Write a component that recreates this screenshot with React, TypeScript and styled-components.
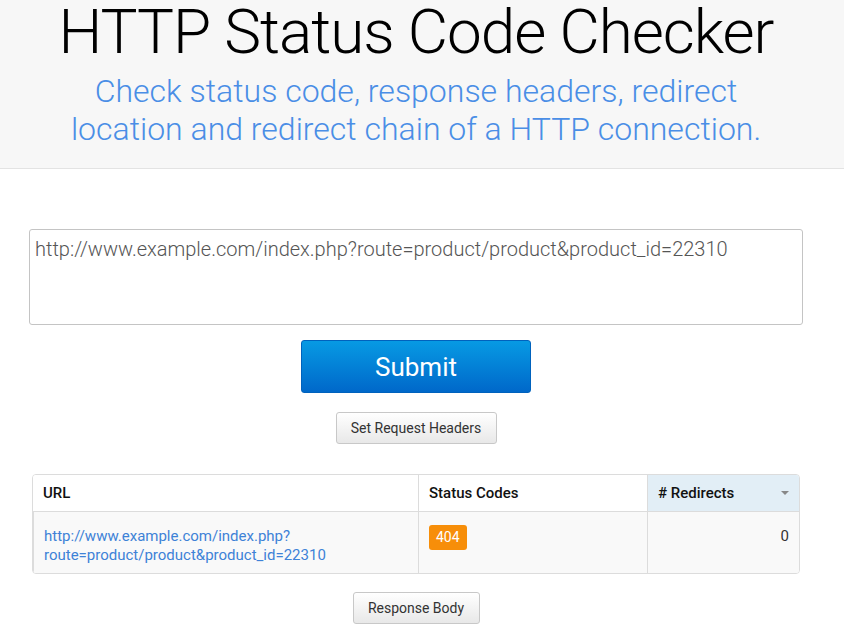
import React from "react";
import styled, { createGlobalStyle } from "styled-components";

const GlobalStyle = createGlobalStyle`
  html, body {
    margin: 0;
    padding: 0;
    background: #fff;
    font-family: Roboto, "Liberation Sans", Arial, sans-serif;
  }
  * {
    box-sizing: border-box;
  }
`;

const Header = styled.header`
  background: #f7f7f7;
  border-bottom: 1px solid #e3e3e3;
  padding: 1px 12px 20px 0;
  text-align: center;

  h1 {
    margin: 0;
    font-size: 62px;
    line-height: 62px;
    letter-spacing: -1px;
    font-weight: 300;
    color: #000;
  }

  p {
    margin: 9px auto 0;
    max-width: 710px;
    font-size: 32px;
    line-height: 38px;
    font-weight: 300;
    color: #4a8ee6;
  }
`;

const Main = styled.main`
  display: flex;
  flex-direction: column;
  align-items: center;
  padding: 60px 12px 0 0;
`;

const UrlInput = styled.textarea`
  width: 774px;
  height: 96px;
  padding: 7px 5px;
  border: 1px solid #c4c4c4;
  border-radius: 3px;
  font-family: Roboto, "Liberation Sans", Arial, sans-serif;
  font-size: 20px;
  font-weight: 300;
  color: #555;
  resize: none;
  outline: none;
`;

const SubmitButton = styled.button`
  margin-top: 15px;
  width: 230px;
  height: 53px;
  border: 1px solid #0062bd;
  border-radius: 3px;
  background: linear-gradient(#079ae3, #0068ca);
  color: #fff;
  font-family: Roboto, "Liberation Sans", Arial, sans-serif;
  font-size: 26px;
  font-weight: 400;
  cursor: pointer;
`;

const PlainButton = styled.button<{ $top: number; $width: number }>`
  margin-top: ${(p) => p.$top}px;
  width: ${(p) => p.$width}px;
  height: 32px;
  border: 1px solid #c8c8c8;
  border-radius: 3px;
  background: linear-gradient(#ffffff, #e8e8e8);
  color: #333;
  font-family: Roboto, "Liberation Sans", Arial, sans-serif;
  font-size: 14px;
  cursor: pointer;
`;

const Table = styled.div`
  margin-top: 30px;
  width: 768px;
  display: grid;
  grid-template-columns: 385px 229px 1fr;
  border: 1px solid #dcdcdc;
  border-radius: 4px;
  overflow: hidden;
  font-size: 15px;
`;

const HeadCell = styled.div<{ $sorted?: boolean }>`
  height: 37px;
  display: flex;
  align-items: center;
  justify-content: space-between;
  padding: 0 10px;
  font-weight: 500;
  color: #111;
  background: ${(p) => (p.$sorted ? "#e2eef6" : "#fff")};
  border-bottom: 1px solid #dcdcdc;
  & + & {
    border-left: 1px solid #dcdcdc;
  }
`;

const Cell = styled.div<{ $right?: boolean }>`
  height: 61px;
  padding: 15px 10px 0;
  background: #f9f9f9;
  line-height: 19px;
  color: #333;
  text-align: ${(p) => (p.$right ? "right" : "left")};
  border-left: 1px solid #dcdcdc;
  &:first-of-type {
    border-left: none;
  }
`;

const Link = styled.a`
  color: #3e82d7;
  text-decoration: none;
`;

const Badge = styled.span`
  display: inline-block;
  margin-top: -2px;
  padding: 0 7px;
  height: 25px;
  line-height: 25px;
  border-radius: 3px;
  background: #f78e09;
  color: #fff;
  font-size: 14px;
`;

const Caret = styled.span`
  width: 0;
  height: 0;
  border-left: 4px solid transparent;
  border-right: 4px solid transparent;
  border-top: 4px solid #888;
`;

export default function App() {
  return (
    <>
      <GlobalStyle />
      <Header>
        <h1>HTTP Status Code Checker</h1>
        <p>
          Check status code, response headers, redirect location and redirect
          chain of a HTTP connection.
        </p>
      </Header>
      <Main>
        <UrlInput
          defaultValue="http://www.example.com/index.php?route=product/product&product_id=22310"
        />
        <SubmitButton>Submit</SubmitButton>
        <PlainButton $top={19} $width={161}>
          Set Request Headers
        </PlainButton>
        <Table>
          <HeadCell>URL</HeadCell>
          <HeadCell>Status Codes</HeadCell>
          <HeadCell $sorted>
            # Redirects
            <Caret />
          </HeadCell>
          <Cell>
            <Link href="#">
              http://www.example.com/index.php?
              <br />
              route=product/product&amp;product_id=22310
            </Link>
          </Cell>
          <Cell>
            <Badge>404</Badge>
          </Cell>
          <Cell $right>0</Cell>
        </Table>
        <PlainButton $top={18} $width={127}>
          Response Body
        </PlainButton>
      </Main>
    </>
  );
}
